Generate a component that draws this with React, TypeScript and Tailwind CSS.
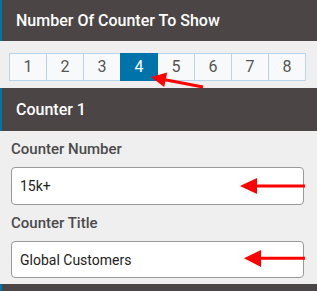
import React from "react";

const counts = [1, 2, 3, 4, 5, 6, 7, 8];

const Arrows = () => (
  <svg
    className="pointer-events-none absolute left-0 top-0"
    width="317"
    height="291"
    viewBox="0 0 317 291"
  >
    <g fill="#ff0000" stroke="#ff0000">
      <line x1="165" y1="79.7" x2="203" y2="87" strokeWidth="3" />
      <polygon points="151,77 164.2,87 167.2,72.6" stroke="none" />
      <line x1="255" y1="186" x2="305" y2="186" strokeWidth="3" />
      <polygon points="240,186 257,178 257,194" stroke="none" />
      <line x1="259" y1="258.3" x2="305" y2="258.3" strokeWidth="3" />
      <polygon points="244,258.3 261,250 261,267" stroke="none" />
    </g>
  </svg>
);

const App = () => {
  return (
    <div
      className="relative w-[317px] h-[291px] overflow-hidden bg-[#efefef]"
      style={{ fontFamily: "Roboto, 'Liberation Sans', sans-serif" }}
    >
      <div className="h-[41px] flex items-center pl-[14px] border-l-2 border-[#0073aa] bg-[#4b4645] text-white text-base font-medium">
        Number Of Counter To Show
      </div>

      <section className="h-[47px] pt-[12px] pl-[9px]">
        <div className="flex">
          {counts.map((n) => (
            <button
              key={n}
              className={
                n === 4
                  ? "w-[38px] h-[28px] -ml-px first:ml-0 flex items-center justify-center border border-[#0073aa] bg-[#0073aa] text-white text-[16px] relative"
                  : "w-[38px] h-[28px] -ml-px first:ml-0 flex items-center justify-center border border-[#b7d4ea] bg-[#f8f9fa] text-[#555] text-[16px]"
              }
            >
              {n}
            </button>
          ))}
        </div>
      </section>

      <div className="h-[43px] flex items-center pl-[14px] border-l-2 border-[#0073aa] bg-[#4b4645] text-white text-base font-medium">
        Counter 1
      </div>

      <section className="h-[153px] pt-[8px] pl-[11px] pr-[13px] flex flex-col">
        <label className="h-[20px] leading-[20px] text-[15px] font-medium text-[#4a4a4a]">
          Counter Number
        </label>
        <div className="mt-[8px] h-[38px] flex items-center px-[8px] bg-white border border-[#999] rounded-[4px] text-sm text-[#222]">
          15k+
        </div>
        <label className="mt-[8px] h-[20px] leading-[20px] text-[15px] font-medium text-[#4a4a4a]">
          Counter Title
        </label>
        <div className="mt-[8px] h-[37px] flex items-center px-[8px] bg-white border border-[#999] rounded-[4px] text-sm text-[#222]">
          Global Customers
        </div>
      </section>

      <div className="h-[7px] border-l-2 border-[#0073aa] bg-[#4b4645]" />

      <Arrows />
    </div>
  );
};

export default App;
